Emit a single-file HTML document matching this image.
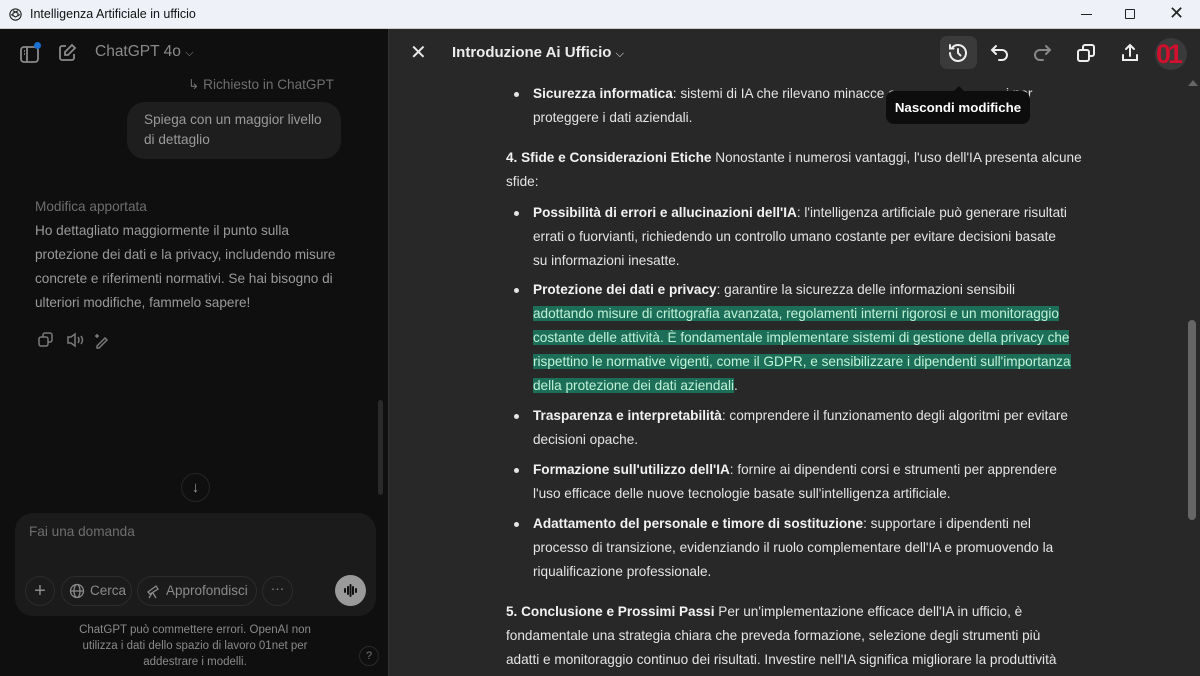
<!DOCTYPE html>
<html><head><meta charset="utf-8"><style>
*{margin:0;padding:0;box-sizing:border-box}
html,body{width:1200px;height:676px;overflow:hidden}
body{font-family:"Liberation Sans",sans-serif;background:#282828;position:relative}
.abs{position:absolute}
#title{left:0;top:0;width:1200px;height:29px;background:#eef2f8;border-bottom:1px solid #ccc}
#left{left:0;top:29px;width:389px;height:647px;background:#0f0f0f;border-right:1px solid #333}
#right{left:390px;top:29px;width:810px;height:647px;background:#282828}
.t{position:absolute;font-size:13.6px;color:#e4e4e4;white-space:nowrap;line-height:24px}
.t b{color:#f2f2f2}
.hl{background:#1d6e58;color:#bff2d8}
.dot{position:absolute;width:5px;height:5px;border-radius:50%;background:#e4e4e4}
.lt{position:absolute;font-size:13.6px;color:#9a9a9a;white-space:nowrap;line-height:24px}
.pill{position:absolute;top:547px;height:30px;border:1px solid #2c2c2c;border-radius:15px;color:#8a8a8a;font-size:13.5px;line-height:28px}
</style></head><body>
<div id="title" class="abs">
<svg class="abs" style="left:8px;top:7px" width="15" height="15" viewBox="0 0 24 24" fill="none" stroke="#222" stroke-width="1.8"><circle cx="12" cy="12" r="9"/><path d="M8 6l8 4v5M16 6l-8 4v5M5 12l7 4 7-4"/></svg>
<div class="abs" style="left:30px;top:7px;font-size:12.5px;color:#111">Intelligenza Artificiale in ufficio</div>
<div class="abs" style="left:1081px;top:14px;width:11px;height:1px;background:#222"></div>
<div class="abs" style="left:1125px;top:9px;width:10px;height:10px;border:1.3px solid #222;border-radius:1px"></div>
<div class="abs" style="left:1169px;top:3px;font-size:18px;color:#222">✕</div>
</div>

<div id="left" class="abs">
<svg class="abs" style="left:19px;top:14px" width="22" height="22" viewBox="0 0 22 22" fill="none" stroke="#8a8a8a" stroke-width="1.8"><rect x="2" y="4" width="17" height="15" rx="3"/><path d="M8 4v15M5 8h1M5 11h1"/></svg>
<div class="abs" style="left:34px;top:13px;width:7px;height:7px;border-radius:50%;background:#1b6fd0"></div>
<svg class="abs" style="left:57px;top:14px" width="20" height="20" viewBox="0 0 20 20" fill="none" stroke="#8a8a8a" stroke-width="1.8"><path d="M9 3H5a2 2 0 0 0-2 2v10a2 2 0 0 0 2 2h10a2 2 0 0 0 2-2v-4"/><path d="M15 2l3 3-7 7H8V9z"/></svg>
<div class="abs" style="left:95px;top:14px;font-size:15.5px;color:#8a8a8a">ChatGPT 4o <span style="font-size:11px">⌵</span></div>
<div class="lt" style="left:188px;top:44px;color:#6e6e6e">↳ Richiesto in ChatGPT</div>
<div class="abs" style="left:127px;top:73px;width:214px;height:57px;background:#1e1e1e;border-radius:18px"></div>
<div class="lt" style="left:144px;top:81px;line-height:20px">Spiega con un maggior livello<br>di dettaglio</div>
<div class="lt" style="left:35px;top:166px;color:#6e6e6e">Modifica apportata</div>
<div class="lt" style="left:35px;top:190px">Ho dettagliato maggiormente il punto sulla<br>protezione dei dati e la privacy, includendo misure<br>concrete e riferimenti normativi. Se hai bisogno di<br>ulteriori modifiche, fammelo sapere!</div>
<svg class="abs" style="left:37px;top:302px" width="80" height="18" viewBox="0 0 80 18" fill="none" stroke="#7a7a7a" stroke-width="1.5"><rect x="2" y="6" width="9" height="9" rx="2"/><path d="M6 6V4a2 2 0 0 1 2-2h5a2 2 0 0 1 2 2v5a2 2 0 0 1-2 2h-2"/><path d="M31 6h3l4-3v12l-4-3h-3z M41 6q2 3 0 6 M44 5q3 4 0 8"/><path d="M60 15l8-8 2 2-8 8h-2zM60 3v4M58 5h4"/></svg>
<div class="abs" style="left:181px;top:444px;width:29px;height:29px;border-radius:50%;border:1px solid #252525;color:#999;text-align:center;line-height:27px;font-size:15px">↓</div>
<div class="abs" style="left:378px;top:371px;width:5px;height:95px;background:#2a2a2a;border-radius:3px"></div>
<div class="abs" style="left:15px;top:484px;width:361px;height:103px;background:#1b1b1b;border-radius:18px"></div>
<div class="lt" style="left:29px;top:491px;color:#6e6e6e">Fai una domanda</div>
<div class="pill" style="left:25px;width:30px;text-align:center;font-size:20px">+</div>
<div class="pill" style="left:61px;width:71px;padding-left:28px;">Cerca</div>
<svg class="abs" style="left:69px;top:554px" width="16" height="16" viewBox="0 0 16 16" fill="none" stroke="#8a8a8a" stroke-width="1.3"><circle cx="8" cy="8" r="6.5"/><ellipse cx="8" cy="8" rx="3" ry="6.5"/><path d="M1.5 8h13"/></svg>
<div class="pill" style="left:137px;width:120px;padding-left:28px;">Approfondisci</div>
<svg class="abs" style="left:145px;top:554px" width="16" height="16" viewBox="0 0 16 16" fill="none" stroke="#8a8a8a" stroke-width="1.3"><path d="M3 9l8-6 2 3-8 5zM7 10l-3 5M8 10l3 5"/></svg>
<div class="pill" style="left:262px;width:31px;text-align:center;line-height:24px">···</div>
<div class="abs" style="left:335px;top:546px;width:31px;height:31px;border-radius:50%;background:#9a9a9a"></div>
<svg class="abs" style="left:341px;top:552px" width="19" height="19" viewBox="0 0 19 19" stroke="#111" stroke-width="2" stroke-linecap="round"><path d="M4 8v3M9.5 4v11M15 8v3M12 6v7M7 6v7"/></svg>
<div class="abs" style="left:65px;top:593px;width:260px;text-align:center;font-size:11.5px;color:#8a8a8a;line-height:16px">ChatGPT può commettere errori. OpenAI non utilizza i dati dello spazio di lavoro 01net per addestrare i modelli.</div>
<div class="abs" style="left:359px;top:617px;width:20px;height:20px;border-radius:50%;border:1px solid #2a2a2a;color:#777;font-size:11px;text-align:center;line-height:18px">?</div>
</div>

<div id="right" class="abs"></div>
<div class="abs" style="left:410px;top:40px;font-size:20px;color:#e8e8e8">✕</div>
<div class="abs" style="left:452px;top:44px;font-size:15px;color:#ececec;font-weight:bold">Introduzione Ai Ufficio <span style="font-weight:normal;font-size:11px">⌵</span></div>
<div class="abs" style="left:940px;top:36px;width:37px;height:33px;background:#3a3a3a;border-radius:7px"></div>
<svg class="abs" style="left:946px;top:41px" width="24" height="24" viewBox="0 0 24 24" fill="none" stroke="#eee" stroke-width="2" stroke-linecap="round"><path d="M4 12a8 8 0 1 0 2.5-5.8M4 4v3.5h3.5"/><path d="M12 8v4l2.5 2.5"/></svg>
<svg class="abs" style="left:989px;top:42px" width="22" height="22" viewBox="0 0 22 22" fill="none" stroke="#eee" stroke-width="2" stroke-linecap="round"><path d="M7 4L3 8l4 4M3 8h10a5 5 0 0 1 0 10h-3"/></svg>
<svg class="abs" style="left:1031px;top:42px" width="22" height="22" viewBox="0 0 22 22" fill="none" stroke="#888" stroke-width="2" stroke-linecap="round"><path d="M15 4l4 4-4 4M19 8H9a5 5 0 0 0 0 10h3"/></svg>
<svg class="abs" style="left:1075px;top:42px" width="22" height="22" viewBox="0 0 22 22" fill="none" stroke="#eee" stroke-width="2"><rect x="3" y="8" width="11" height="11" rx="2"/><path d="M8 8V5a2 2 0 0 1 2-2h7a2 2 0 0 1 2 2v7a2 2 0 0 1-2 2h-3"/></svg>
<svg class="abs" style="left:1119px;top:42px" width="22" height="22" viewBox="0 0 22 22" fill="none" stroke="#eee" stroke-width="2" stroke-linecap="round"><path d="M11 14V3M7 7l4-4 4 4M4 13v5h14v-5"/></svg>
<div class="abs" style="left:1155px;top:38px;width:32px;height:32px;border-radius:50%;background:#3a3a3a;overflow:hidden"><div style="font-size:27px;font-weight:bold;color:#d0102c;line-height:32px;margin-left:1px;letter-spacing:-3px">01</div></div>

<div class="dot" style="left:514px;top:92px"></div>
<div class="t" style="left:533px;top:82px"><b>Sicurezza informatica</b>: sistemi di IA che rilevano minacce e<br>proteggere i dati aziendali.</div>
<div class="t" style="left:1006px;top:82px">i per</div>
<div class="abs" style="left:886px;top:91px;width:144px;height:33px;background:#0d0d0d;border-radius:8px;color:#fff;font-size:13.3px;font-weight:bold;text-align:center;line-height:33px">Nascondi modifiche</div>
<div class="abs" style="left:953px;top:86px;width:0;height:0;border-left:6px solid transparent;border-right:6px solid transparent;border-bottom:6px solid #0d0d0d"></div>

<div class="t" style="left:506px;top:146px"><b>4. Sfide e Considerazioni Etiche</b> Nonostante i numerosi vantaggi, l'uso dell'IA presenta alcune<br>sfide:</div>
<div class="dot" style="left:514px;top:211px"></div>
<div class="t" style="left:533px;top:201px"><b>Possibilità di errori e allucinazioni dell'IA</b>: l'intelligenza artificiale può generare risultati<br>errati o fuorvianti, richiedendo un controllo umano costante per evitare decisioni basate<br>su informazioni inesatte.</div>
<div class="dot" style="left:514px;top:288px"></div>
<div class="t" style="left:533px;top:278px"><b>Protezione dei dati e privacy</b>: garantire la sicurezza delle informazioni sensibili<br><span class="hl">adottando misure di crittografia avanzata, regolamenti interni rigorosi e un monitoraggio</span><br><span class="hl">costante delle attività. È fondamentale implementare sistemi di gestione della privacy che</span><br><span class="hl">rispettino le normative vigenti, come il GDPR, e sensibilizzare i dipendenti sull'importanza</span><br><span class="hl">della protezione dei dati aziendali</span>.</div>
<div class="dot" style="left:514px;top:414px"></div>
<div class="t" style="left:533px;top:404px"><b>Trasparenza e interpretabilità</b>: comprendere il funzionamento degli algoritmi per evitare<br>decisioni opache.</div>
<div class="dot" style="left:514px;top:468px"></div>
<div class="t" style="left:533px;top:458px"><b>Formazione sull'utilizzo dell'IA</b>: fornire ai dipendenti corsi e strumenti per apprendere<br>l'uso efficace delle nuove tecnologie basate sull'intelligenza artificiale.</div>
<div class="dot" style="left:514px;top:522px"></div>
<div class="t" style="left:533px;top:512px"><b>Adattamento del personale e timore di sostituzione</b>: supportare i dipendenti nel<br>processo di transizione, evidenziando il ruolo complementare dell'IA e promuovendo la<br>riqualificazione professionale.</div>
<div class="t" style="left:506px;top:600px"><b>5. Conclusione e Prossimi Passi</b> Per un'implementazione efficace dell'IA in ufficio, è<br>fondamentale una strategia chiara che preveda formazione, selezione degli strumenti più<br>adatti e monitoraggio continuo dei risultati. Investire nell'IA significa migliorare la produttività</div>

<div class="abs" style="left:1188px;top:80px;width:0;height:0;border-left:5px solid transparent;border-right:5px solid transparent;border-bottom:6px solid #666"></div>
<div class="abs" style="left:1188px;top:320px;width:8px;height:200px;background:#666;border-radius:4px"></div>
</body></html>
